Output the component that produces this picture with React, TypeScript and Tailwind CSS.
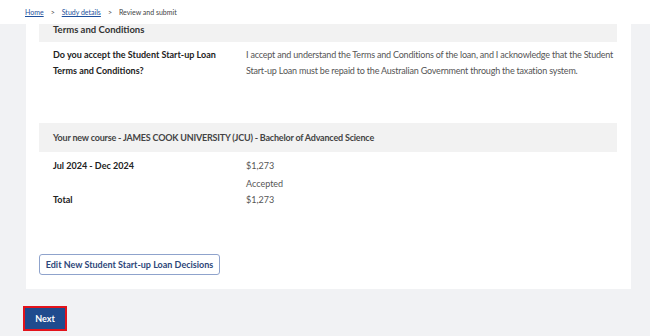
import React from "react";

const font = { fontFamily: 'Lato, "Noto Sans", sans-serif' };

export default function App() {
  return (
    <div className="w-[650px] h-[336px] overflow-hidden bg-[#f1f2f4] text-[#333]" style={font}>
      <div className="h-[24px] bg-white flex items-center pl-[25px] text-[7px] text-[#444] gap-[7px]">
        <a className="text-[#1d4f9c] underline">Home</a>
        <span>&gt;</span>
        <a className="text-[#1d4f9c] underline">Study details</a>
        <span>&gt;</span>
        <span>Review and submit</span>
      </div>
      <div className="ml-[26px] mr-[19px] bg-white pl-[13px] pr-[14px] pb-[14px]">
        <div className="h-[18px] bg-[#f2f2f2] flex items-end pb-[6px] px-[14px]">
          <span className="text-[9.5px] font-bold leading-[12px] text-[#333]">Terms and Conditions</span>
        </div>
        <div className="flex pl-[14px] pt-[5px] text-[9px] leading-[16px]">
          <div className="w-[193px] shrink-0 font-bold text-[#222]">
            Do you accept the Student Start-up Loan
            <br />
            Terms and Conditions?
          </div>
          <div className="text-[#555] tracking-[-0.2px]">
            I accept and understand the Terms and Conditions of the loan, and I acknowledge that the Student
            Start-up Loan must be repaid to the Australian Government through the taxation system.
          </div>
        </div>
        <div className="mt-[44px] h-[29px] bg-[#f2f2f2] flex items-center px-[14px]">
          <span className="text-[9px] font-bold text-[#444] tracking-[-0.2px]">
            Your new course - JAMES COOK UNIVERSITY (JCU) - Bachelor of Advanced Science
          </span>
        </div>
        <div className="px-[14px] pt-[6px] text-[9px] leading-[16px]">
          <div className="flex">
            <div className="w-[193px] shrink-0 font-bold text-[#222]">Jul 2024 - Dec 2024</div>
            <div className="text-[#555]">$1,273</div>
          </div>
          <div className="flex mt-[2px]">
            <div className="w-[193px] shrink-0"></div>
            <div className="text-[#555]">Accepted</div>
          </div>
          <div className="flex">
            <div className="w-[193px] shrink-0 font-bold text-[#222]">Total</div>
            <div className="text-[#555]">$1,273</div>
          </div>
        </div>
        <div className="mt-[46px] flex">
          <button className="h-[21px] w-[181px] whitespace-nowrap border border-[#8fa3cc] rounded-[3px] text-[9px] font-bold text-[#2d4679] bg-white">
            Edit New Student Start-up Loan Decisions
          </button>
        </div>
      </div>
      <div className="pl-[23px] pt-[15px]">
        <button className="h-[25px] w-[44px] border-2 border-[#e3131b] bg-[#1f4b8e] text-white text-[9px] font-bold">
          Next
        </button>
      </div>
    </div>
  );
}
